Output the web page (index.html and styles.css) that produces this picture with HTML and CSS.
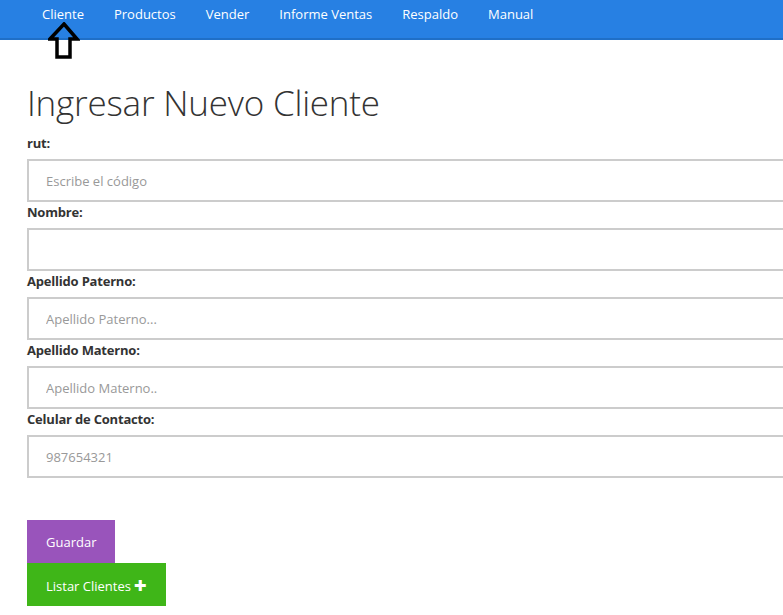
FILE: index.html
```html
<!DOCTYPE html>
<html lang="es">
<head>
<meta charset="utf-8">
<title>Ingresar Nuevo Cliente</title>
<link rel="stylesheet" href="styles.css">
</head>
<body>
<nav class="navbar">
  <ul class="nav-list">
    <li><a href="#">Cliente</a></li>
    <li><a href="#">Productos</a></li>
    <li><a href="#">Vender</a></li>
    <li><a href="#">Informe Ventas</a></li>
    <li><a href="#">Respaldo</a></li>
    <li><a href="#">Manual</a></li>
  </ul>
  <svg class="arrow" width="32" height="38" viewBox="0 0 32 38">
    <path d="M16 2 L29 17 L22 17 L22 35 L9 35 L9 17 L2 17 Z" fill="none" stroke="#000" stroke-width="3.5" stroke-linejoin="miter"/>
  </svg>
</nav>
<main class="content">
  <h1 class="title">Ingresar Nuevo Cliente</h1>
  <form class="form">
    <label class="label">rut:</label>
    <input class="field" type="text" placeholder="Escribe el código">
    <label class="label">Nombre:</label>
    <input class="field" type="text">
    <label class="label">Apellido Paterno:</label>
    <input class="field" type="text" placeholder="Apellido Paterno...">
    <label class="label">Apellido Materno:</label>
    <input class="field" type="text" placeholder="Apellido Materno..">
    <label class="label">Celular de Contacto:</label>
    <input class="field" type="text" placeholder="987654321">
    <div class="actions">
      <button type="button" class="btn btn-purple">Guardar</button>
      <button type="button" class="btn btn-green">Listar Clientes <span class="plus">✚</span></button>
    </div>
  </form>
</main>
</body>
</html>
```
FILE: styles.css
```css
html, body {
  margin: 0;
  padding: 0;
  overflow: hidden;
}
body {
  font-family: "Open Sans", "Noto Sans", sans-serif;
  color: #333;
  background: #fff;
}
.navbar {
  position: relative;
  height: 38px;
  background: #2780e3;
  border-bottom: 2px solid #1f6fc7;
}
.nav-list {
  list-style: none;
  margin: 0;
  padding: 0 0 0 27px;
  display: flex;
}
.nav-list a {
  display: block;
  padding: 4px 15px;
  line-height: 20px;
  font-size: 13px;
  color: #fff;
  text-decoration: none;
}
.arrow {
  position: absolute;
  left: 48px;
  top: 22px;
}
.content {
  padding: 0 0 0 27px;
}
.title {
  margin: 41px 0 9px;
  font-size: 35px;
  font-weight: 300;
  line-height: 44px;
  letter-spacing: -0.2px;
  color: #333;
}
.form {
  display: flex;
  flex-direction: column;
  align-items: flex-start;
}
.label {
  display: block;
  font-size: 13px;
  font-weight: 700;
  line-height: 18px;
  margin: 1px 0 7px;
  color: #333;
  letter-spacing: -0.2px;
}
.form .label:first-child {
  margin-top: 0;
}
.field {
  box-sizing: border-box;
  width: 780px;
  height: 43px;
  border: 2px solid #ccc;
  border-radius: 0;
  padding: 0 17px;
  font-family: "Open Sans", "Noto Sans", sans-serif;
  font-size: 13px;
  color: #555;
  outline: none;
}
.field::placeholder {
  color: #999;
}
.actions {
  margin-top: 42px;
  display: flex;
  flex-direction: column;
  align-items: flex-start;
}
.btn {
  border: none;
  border-radius: 0;
  height: 43px;
  padding: 0 19px;
  font-family: "Open Sans", "Noto Sans", sans-serif;
  font-size: 13px;
  color: #fff;
  cursor: pointer;
}
.btn-purple {
  background: #9954bb;
}
.btn-green {
  background: #3fb618;
}
.plus {
  font-size: 15px;
}
```
